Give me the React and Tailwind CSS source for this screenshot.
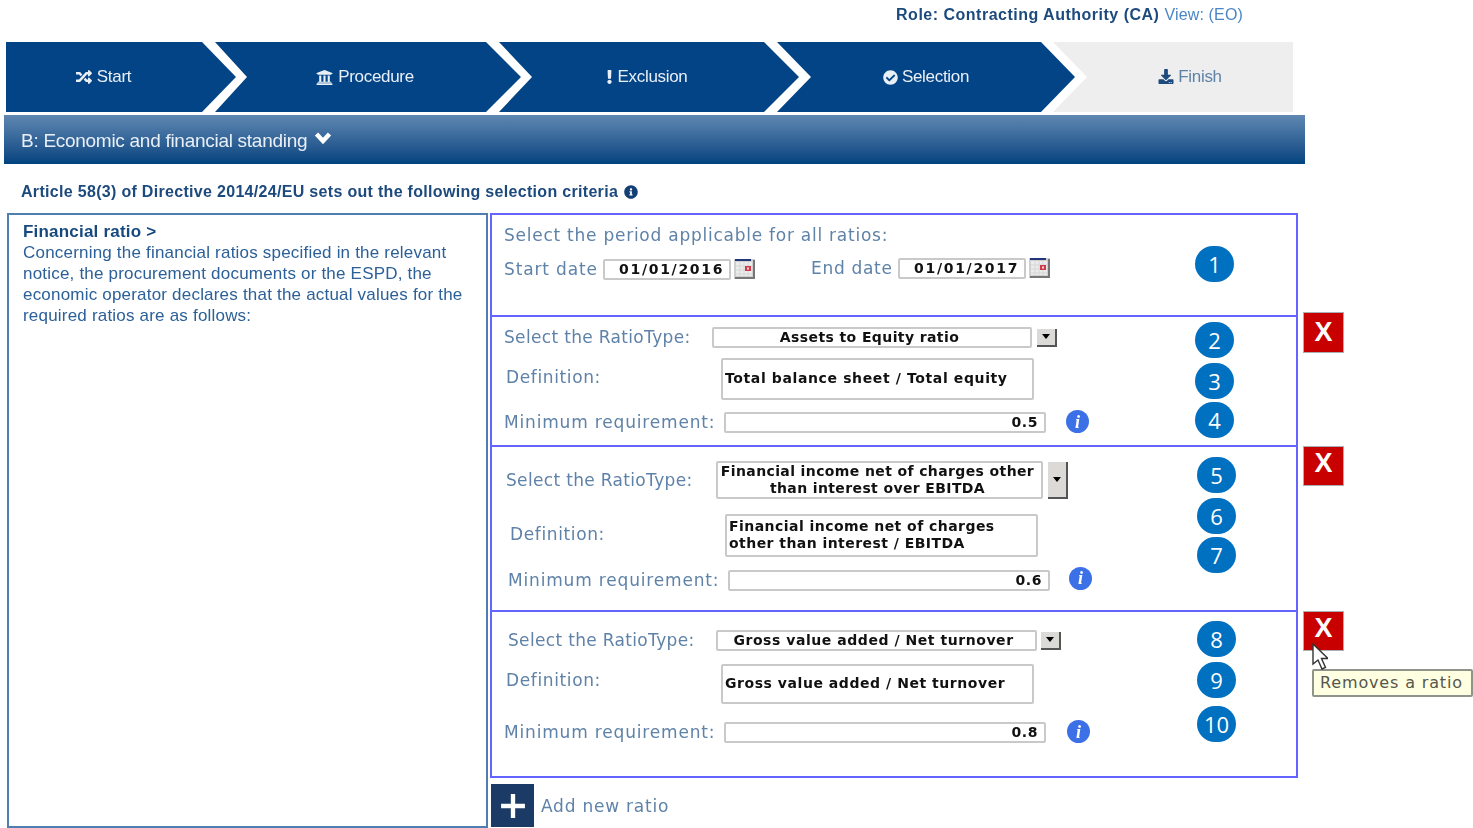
import React from 'react';
import { FaRandom, FaUniversity, FaExclamation, FaCheckCircle, FaDownload, FaInfoCircle } from 'react-icons/fa';

const sans = 'font-["Liberation_Sans",Arial,sans-serif]';
const verdana = 'font-["DejaVu_Sans",Verdana,sans-serif]';

// ---- wizard step ----
const Step = ({ className, icon, label }) => (
  <div className={`h-[70px] flex items-center justify-center gap-[4px] text-[17px] tracking-[-0.3px] ${className}`}>
    {icon}
    <span>{label}</span>
  </div>
);

const Label = ({ className, children }) => (
  <span className={`${verdana} text-[17px] leading-none text-[#5f82a8] whitespace-nowrap ${className}`}>{children}</span>
);

const Field = ({ className, children }) => (
  <div className={`${verdana} font-bold text-[14px] leading-[17px] text-[#111] bg-white border-2 border-[#c9c9c9] rounded-[2px] ${className}`}>
    {children}
  </div>
);

const DropButton = ({ className }) => (
  <div className={`flex items-center justify-center bg-[#dcdad6] border-r-2 border-b-2 border-[#555] ${className}`}>
    <span className="w-0 h-0 border-x-[4px] border-x-transparent border-t-[5px] border-t-black" />
  </div>
);

const CalendarIcon = ({ className }) => (
  <svg viewBox="0 0 21 20" className={`w-[21px] h-[20px] ${className}`}>
    <rect x="0" y="0" width="21" height="20" fill="#cfcfcf" />
    <rect x="1" y="0" width="16" height="2" fill="#22367a" />
    <rect x="2" y="3" width="16" height="14" fill="#ececec" />
    <path d="M2 7h16M2 11h16M2 15h16M6 3v14M10 3v14M14 3v14" stroke="#d6d6d6" strokeWidth="1" />
    <rect x="11" y="7" width="6" height="5" fill="#d03a4a" />
    <rect x="13" y="8.500" width="2" height="2" fill="#f6dfe0" />
    <path d="M20 1v18H1" stroke="#777" strokeWidth="2" fill="none" />
  </svg>
);

const InfoDot = ({ className }) => (
  <div className={`w-[23px] h-[23px] rounded-full bg-[#3b70e6] flex items-center justify-center text-white italic font-bold text-[18px] leading-none font-["Liberation_Serif",serif] ${className}`}>
    i
  </div>
);

// numbered callouts sit on top of the form
const Callout = ({ className, n }) => (
  <div className={`absolute w-[39px] h-[36px] rounded-full bg-[#0070c0] text-white flex items-center justify-center text-[22px] font-["Open_Sans",sans-serif] ${className}`}>
    {n}
  </div>
);

const RemoveButton = ({ className }) => (
  <div className={`absolute left-[1303px] w-[41px] bg-[#c80000] border border-[#a9b0b3] flex items-start justify-center text-white font-bold text-[27px] ${sans} ${className}`}>
    X
  </div>
);

const App = () => {
  return (
    <div className={`relative w-[1473px] h-[828px] overflow-hidden bg-white ${sans}`}>
      <div className="blur-[0.5px]">
        <div className="h-[42px] w-[1243px] flex justify-end pt-[6px] text-[16px] leading-[18px] tracking-[0.5px] whitespace-nowrap">
          <span className="font-bold text-[#1d4a7d]">Role: Contracting Authority (CA)</span>
          <span className="ml-[5px] text-[#4a86c5] tracking-[0.15px]">View: (EO)</span>
        </div>

        <div className="flex ml-[6px] w-[1287px] text-[#e9eff6]">
          <Step
            className="w-[230px] shrink-0 pr-[36px] bg-[#034487] [clip-path:polygon(0_0,196px_0,230px_50%,196px_100%,0_100%)]"
            icon={<FaRandom className="w-[18px] h-[16px]" />}
            label="Start"
          />
          <Step
            className="w-[306px] shrink-0 -ml-[21px] pr-[7px] bg-[#034487] [clip-path:polygon(0_0,271px_0,306px_50%,271px_100%,0_100%,32px_50%)]"
            icon={<FaUniversity className="w-[19px] h-[17px]" />}
            label="Procedure"
          />
          <Step
            className="w-[300px] shrink-0 -ml-[22px] pr-[4px] bg-[#034487] [clip-path:polygon(0_0,265px_0,300px_50%,265px_100%,0_100%,33px_50%)]"
            icon={<FaExclamation className="w-[7px] h-[14px]" />}
            label="Exclusion"
          />
          <Step
            className="w-[298px] shrink-0 -ml-[22px] bg-[#034487] [clip-path:polygon(0_0,264px_0,298px_50%,264px_100%,0_100%,34px_50%)]"
            icon={<FaCheckCircle className="w-[15px] h-[15px]" />}
            label="Selection"
          />
          <Step
            className="w-[240px] shrink-0 -ml-[22px] pl-[34px] bg-[#eeeeee] text-[#5f82a8] [clip-path:polygon(0_0,100%_0,100%_100%,0_100%,34px_50%)]"
            icon={<FaDownload className="w-[16px] h-[15px] text-[#1d4a7d] -mt-[2px]" />}
            label="Finish"
          />
        </div>

        <div className="mt-[3px] ml-[4px] w-[1301px] h-[49px] pl-[17px] flex items-center gap-[7px] bg-gradient-to-b from-[#5f88b2] to-[#00437f] text-[#e9eff6] text-[19px] tracking-[-0.28px]">
          <span className="pt-[3px]">B: Economic and financial standing</span>
          <svg viewBox="0 0 18 14" className="w-[18px] h-[14px] -mt-[3px]">
            <path d="M2.500 3l6.500 7 6.500-7" stroke="#fff" strokeWidth="4.500" fill="none" />
          </svg>
        </div>

        <div className="ml-[21px] mt-[17px] h-[21px] flex items-center gap-[6px] font-bold text-[16px] tracking-[0.31px] text-[#1d4a7d]">
          <span>Article 58(3) of Directive 2014/24/EU sets out the following selection criteria</span>
          <FaInfoCircle className="w-[14px] h-[14px] text-[#123f75]" />
        </div>

        <div className="flex mt-[11px] ml-[7px] items-start">
          <div className="w-[481px] h-[615px] border-2 border-[#4f7fb0] pl-[14px] pt-[6px] text-[17px] leading-[21px] tracking-[0.2px] text-[#2c6098]">
            <div className="font-bold text-[#17497f]">Financial ratio &gt;</div>
            Concerning the financial ratios specified in the relevant<br />
            notice, the procurement documents or the ESPD, the<br />
            economic operator declares that the actual values for the<br />
            required ratios are as follows:
          </div>

          <div className="ml-[2px] w-[808px]">
            <div className="w-[808px] h-[565px] border-2 border-[#6464ff] flex flex-col">
              {/* period */}
              <div className="h-[102px] shrink-0 border-b-2 border-[#6464ff] pl-[12px] pt-[12px]">
                <Label className="block leading-[19px] tracking-[0.75px]">Select the period applicable for all ratios:</Label>
                <div className="flex mt-[15px] h-[24px] items-start">
                  <Label className="w-[99px] mt-[2px] tracking-[0.85px]">Start date</Label>
                  <Field className="w-[128px] h-[21px] pl-[14px] tracking-[1.7px]">01/01/2016</Field>
                  <CalendarIcon className="ml-[3px]" />
                  <Label className="ml-[56px] mt-[1px] w-[87px] tracking-[0.7px]">End date</Label>
                  <Field className="w-[128px] h-[21px] -mt-[1px] pl-[14px] tracking-[1.7px]">01/01/2017</Field>
                  <CalendarIcon className="ml-[3px] -mt-[1px]" />
                </div>
              </div>

              {/* ratio 1 */}
              <div className="h-[130px] shrink-0 border-b-2 border-[#6464ff] pl-[12px] pt-[10px]">
                <div className="flex items-center h-[21px]">
                  <Label className="w-[208px] tracking-[0.33px]">Select the RatioType:</Label>
                  <Field className="w-[320px] h-[21px] pr-[5px] text-center tracking-[0.4px]">Assets to Equity ratio</Field>
                  <DropButton className="ml-[5px] w-[20px] h-[18px]" />
                </div>
                <div className="flex mt-[10px]">
                  <Label className="ml-[2px] mt-[11px] w-[215px] tracking-[0.63px]">Definition:</Label>
                  <Field className="w-[313px] h-[42px] pl-[2px] pt-[10px] tracking-[0.62px]">Total balance sheet / Total equity</Field>
                </div>
                <div className="flex items-center mt-[12px] h-[21px]">
                  <Label className="w-[220px] tracking-[0.83px]">Minimum requirement:</Label>
                  <Field className="w-[322px] h-[21px] text-right pr-[6px] tracking-[0.6px]">0.5</Field>
                  <InfoDot className="ml-[20px] -mt-[2px]" />
                </div>
              </div>

              {/* ratio 2 */}
              <div className="h-[165px] shrink-0 border-b-2 border-[#6464ff] pl-[14px] pt-[14px]">
                <div className="flex items-center h-[38px]">
                  <Label className="w-[210px] tracking-[0.33px]">Select the RatioType:</Label>
                  <Field className="w-[327px] h-[38px] pr-[4px] text-center tracking-[0.38px]">Financial income net of charges other<br />than interest over EBITDA</Field>
                  <DropButton className="ml-[5px] w-[20px] h-[37px]" />
                </div>
                <div className="flex mt-[15px]">
                  <Label className="ml-[4px] mt-[12px] w-[215px] tracking-[0.63px]">Definition:</Label>
                  <Field className="w-[313px] h-[43px] pl-[2px] pt-[2px] tracking-[0.45px]">Financial income net of charges<br />other than interest / EBITDA</Field>
                </div>
                <div className="flex items-center mt-[13px] h-[21px]">
                  <Label className="ml-[2px] w-[220px] tracking-[0.83px]">Minimum requirement:</Label>
                  <Field className="w-[322px] h-[21px] text-right pr-[6px] tracking-[0.6px]">0.6</Field>
                  <InfoDot className="ml-[19px] -mt-[5px]" />
                </div>
              </div>

              {/* ratio 3 */}
              <div className="flex-1 pl-[16px] pt-[18px]">
                <div className="flex items-center h-[21px]">
                  <Label className="w-[208px] tracking-[0.33px]">Select the RatioType:</Label>
                  <Field className="w-[321px] h-[21px] pr-[6px] text-center tracking-[0.55px]">Gross value added / Net turnover</Field>
                  <DropButton className="ml-[4px] w-[20px] h-[18px]" />
                </div>
                <div className="flex mt-[13px] -ml-[2px]">
                  <Label className="mt-[8px] w-[215px] tracking-[0.63px]">Definition:</Label>
                  <Field className="w-[313px] h-[40px] pl-[2px] pt-[9px] tracking-[0.55px]">Gross value added / Net turnover</Field>
                </div>
                <div className="flex items-center mt-[18px] h-[21px] -ml-[4px]">
                  <Label className="w-[220px] tracking-[0.83px]">Minimum requirement:</Label>
                  <Field className="w-[322px] h-[21px] text-right pr-[6px] tracking-[0.6px]">0.8</Field>
                  <InfoDot className="ml-[21px] -mt-[2px]" />
                </div>
              </div>
            </div>

            <div className="flex items-center mt-[6px] ml-[1px]">
              <div className="w-[43px] h-[43px] bg-[#1c3a66] flex items-center justify-center">
                <svg viewBox="0 0 24 24" className="w-[26px] h-[26px]">
                  <path d="M12 1v22M1 12h22" stroke="#fff" strokeWidth="4" fill="none" />
                </svg>
              </div>
              <Label className="ml-[7px] mt-[1px] tracking-[0.77px]">Add new ratio</Label>
            </div>
          </div>
        </div>
      </div>

      <Callout n="1" className="left-[1195px] top-[246px]" />
      <Callout n="2" className="left-[1195px] top-[322px]" />
      <Callout n="3" className="left-[1195px] top-[363px]" />
      <Callout n="4" className="left-[1195px] top-[402px]" />
      <Callout n="5" className="left-[1197px] top-[457px]" />
      <Callout n="6" className="left-[1197px] top-[498px]" />
      <Callout n="7" className="left-[1197px] top-[537px]" />
      <Callout n="8" className="left-[1197px] top-[621px]" />
      <Callout n="9" className="left-[1197px] top-[662px]" />
      <Callout n="10" className="left-[1197px] top-[706px]" />

      <RemoveButton className="top-[312px] h-[41px] leading-[38px]" />
      <RemoveButton className="top-[446px] h-[40px] leading-[33px]" />
      <RemoveButton className="top-[611px] h-[40px] leading-[33px]" />

      <div className={`absolute left-[1312px] top-[669px] w-[161px] h-[28px] bg-[#ffffe1] border-2 border-[#8f948a] rounded-[2px] flex items-center pl-[6px] ${verdana} text-[16px] tracking-[0.85px] text-[#55564f] whitespace-nowrap`}>
        Removes a ratio
      </div>

      <svg viewBox="0 0 16 28" className="absolute left-[1312px] top-[643px] w-[16px] h-[28px]">
        <path d="M1 1v20l5-4 4 9 3.500-1.500-4-9h6.500z" fill="#fff" stroke="#333" strokeWidth="1.400" />
      </svg>
    </div>
  );
};

export default App;
